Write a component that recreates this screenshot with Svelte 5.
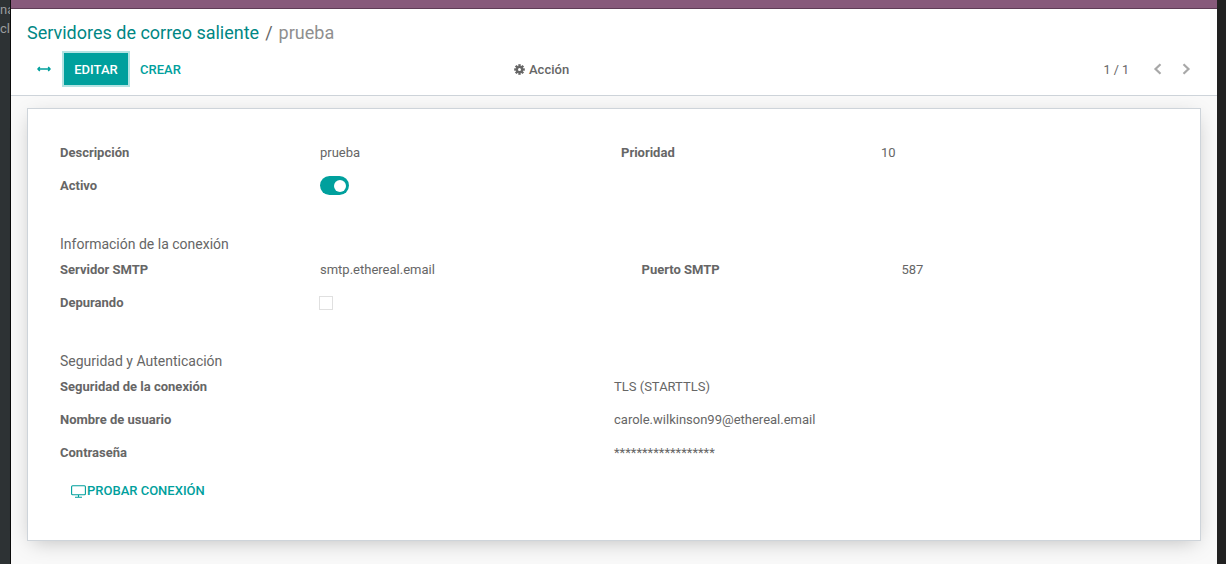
<script>
  const gearTeeth = [0, 45, 90, 135];
</script>

<div class="shell">
  <aside class="behind"><span>na</span><span>cl</span></aside>
  <main class="modal">
    <div class="topbar"></div>
    <header class="control">
      <div class="crumbs"><a href="#a">Servidores de correo saliente</a><span class="sep">/</span><span class="cur">prueba</span></div>
      <div class="tools">
        <div class="left">
          <svg class="expand" width="14" height="6" viewBox="0 0 14 6"><path d="M1 3h12M2.8 1 1 3l1.8 2M11.2 1 13 3l-1.8 2" fill="none" stroke="#00a09d" stroke-width="1.5"/></svg>
          <button class="primary">EDITAR</button>
          <button class="link">CREAR</button>
        </div>
        <div class="action">
          <svg width="11" height="11" viewBox="0 0 11 11"><g fill="#666">{#each gearTeeth as a}<rect x="4.3" y="0.2" width="2.4" height="10.6" transform="rotate({a} 5.5 5.5)"/>{/each}</g><circle cx="5.5" cy="5.5" r="3.6" fill="#666"/><circle cx="5.5" cy="5.5" r="1.5" fill="#fff"/></svg>
          <span>Acción</span>
        </div>
        <div class="pager">
          <span>1 / 1</span>
          <svg width="10" height="12" viewBox="0 0 10 12"><path d="M7.5 1.2 2.5 6l5 4.8" fill="none" stroke="#a8a8a8" stroke-width="2.2"/></svg>
          <svg width="10" height="12" viewBox="0 0 10 12"><path d="M2.5 1.2l5 4.8-5 4.8" fill="none" stroke="#a8a8a8" stroke-width="2.2"/></svg>
        </div>
      </div>
    </header>
    <section class="content">
      <div class="sheet">
        <div class="grid top">
          <b>Descripción</b><span>prueba</span><b>Prioridad</b><span>10</span>
          <b>Activo</b><span class="toggle"><i></i></span>
        </div>
        <h3>Información de la conexión</h3>
        <div class="grid smtp">
          <b>Servidor SMTP</b><span>smtp.ethereal.email</span><b>Puerto SMTP</b><span>587</span>
          <b>Depurando</b><span class="check"></span>
        </div>
        <h3>Seguridad y Autenticación</h3>
        <div class="grid sec">
          <b>Seguridad de la conexión</b><span>TLS (STARTTLS)</span>
          <b>Nombre de usuario</b><span>carole.wilkinson99@ethereal.email</span>
          <b>Contraseña</b><span>******************</span>
        </div>
        <button class="test">
          <svg width="15" height="13" viewBox="0 0 15 13"><rect x="0.6" y="0.8" width="13.8" height="9" rx="1" fill="none" stroke="#00a09d" stroke-width="1.1"/><path d="M7.5 10v2M4 12.2h7" fill="none" stroke="#00a09d" stroke-width="1.1"/></svg>
          <span>PROBAR CONEXIÓN</span>
        </button>
      </div>
    </section>
  </main>
  <aside class="right"></aside>
</div>

<style>
  :global(body) { margin: 0; background: #212121; }
  .shell { display: flex; width: 1226px; height: 564px; overflow: hidden; font-family: Roboto, "Noto Sans", sans-serif; font-size: 13px; color: #666; }
  .behind { width: 10px; flex: none; background: #2d3234; border-right: 1px solid #0b0b0b; color: #9a9d9e; font-size: 13px; display: flex; flex-direction: column; gap: 4px; padding-top: 2px; overflow: hidden; }
  .behind span { white-space: nowrap; line-height: 15px; }
  .modal { width: 1206px; flex: none; display: flex; flex-direction: column; background: #f9f9f9; }
  .right { flex: 1; background: #212121; }
  .topbar { height: 8px; background: #875a7b; border-bottom: 1px solid #5f3d57; flex: none; }
  .control { height: 87px; box-sizing: border-box; background: #fff; border-bottom: 1px solid #ced4da; padding: 12px 16px 0; flex: none; }
  .crumbs { font-size: 18px; line-height: 24px; display: flex; align-items: center; }
  .crumbs a { color: #008784; text-decoration: none; }
  .sep { color: #666; margin: 0 6px; }
  .cur { color: #8f8f8f; }
  .tools { display: grid; grid-template-columns: 487px auto 1fr; align-items: center; margin-top: 8px; }
  .left { display: flex; align-items: center; }
  .expand { margin: 0 13px 0 10px; }
  button { font: inherit; cursor: pointer; border: 0; background: none; padding: 0; }
  .primary { background: #00a09d; color: #fff; font-weight: 500; font-size: 13px; width: 64px; height: 32px; box-shadow: 0 0 0 2px #b3e3e2; margin-right: 12px; }
  .link { color: #00a09d; font-weight: 500; font-size: 13px; }
  .action { display: flex; align-items: center; gap: 4px; font-weight: 500; font-size: 13px; color: #666; }
  .pager { display: flex; align-items: center; justify-content: flex-end; padding-right: 10px; color: #666; }
  .pager span { margin-right: 24px; font-size: 12.5px; }
  .pager svg + svg { margin-left: 18px; }
  .content { flex: 1; padding: 12px 16px 0; }
  .sheet { box-sizing: border-box; height: 433px; background: #fff; border: 1px solid #ced4da; box-shadow: 0 5px 20px -5px rgba(0,0,0,.25); padding: 27px 32px 0; }
  .grid { display: grid; align-items: center; grid-auto-rows: 33px; line-height: 33px; }
  .grid b { font-weight: 700; font-size: 13px; color: #666; }
  .top { grid-template-columns: 260px 301px 260px 1fr; }
  .smtp { grid-template-columns: 260px 321.5px 260px 1fr; }
  .sec { grid-template-columns: 554px 1fr; }
  h3 { margin: 33px 0 -1px; font-weight: 400; font-size: 14px; line-height: 19px; color: #666; }
  .toggle { display: block; width: 29px; height: 19px; border-radius: 10px; background: #00a09d; position: relative; }
  .toggle i { position: absolute; right: 3px; top: 3.5px; width: 12px; height: 12px; border-radius: 50%; background: #fff; }
  .check { display: block; width: 12px; height: 12px; margin-left: -1px; border: 1px solid #e0e0e0; }
  .test { display: flex; align-items: center; gap: 1px; color: #00a09d; font-weight: 500; font-size: 13px; margin: 14px 0 0 11px; line-height: 16px; }
</style>
